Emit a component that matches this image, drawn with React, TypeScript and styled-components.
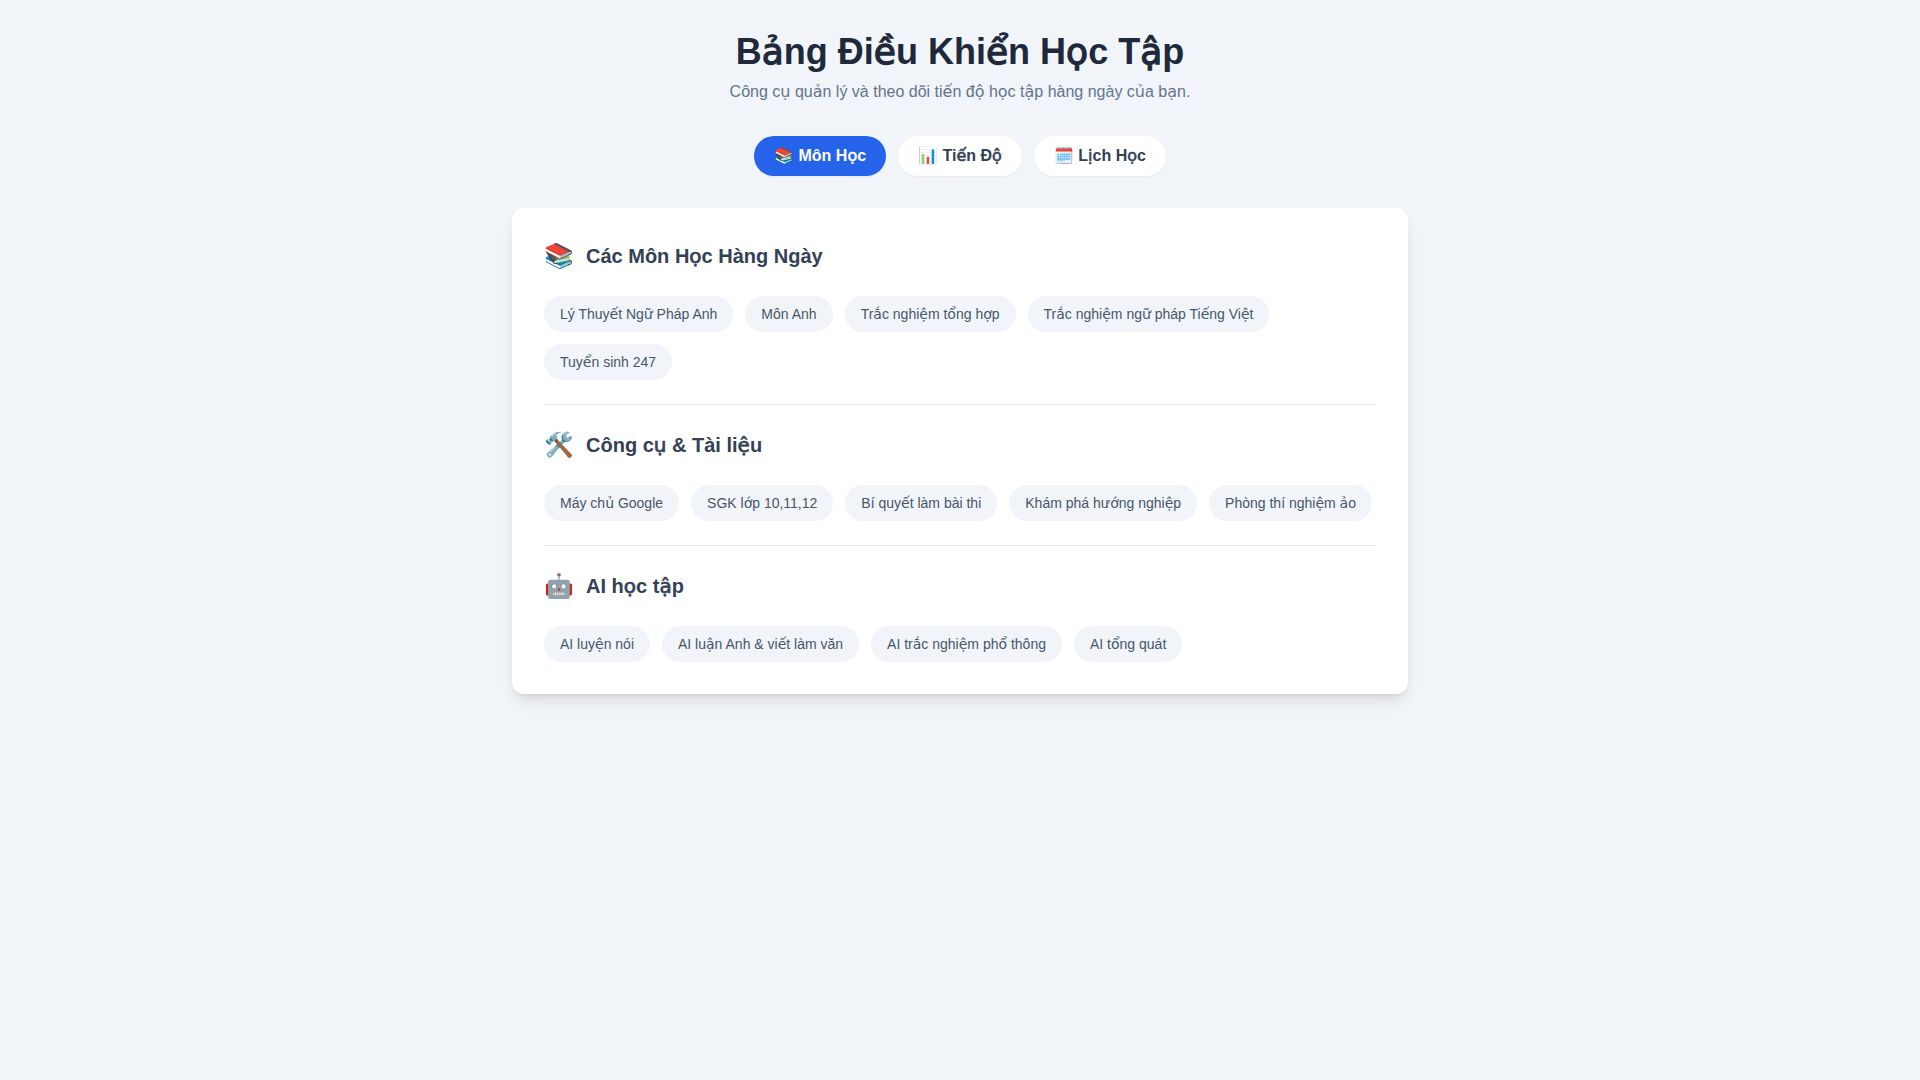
import React, { useState } from "react";
import styled, { createGlobalStyle, css } from "styled-components";

const GlobalStyle = createGlobalStyle`
  *, *::before, *::after { box-sizing: border-box; }
  body {
    margin: 0;
    min-height: 100vh;
    background: #f1f5f9;
    color: #1e293b;
    font-family: "Liberation Sans", Arial, sans-serif;
    font-size: 16px;
    line-height: 24px;
  }
`;

const Accented = styled.span<{ $bold: boolean }>`
  font-family: "DejaVu Sans", sans-serif;
  font-weight: 400;
  line-height: 0;
  ${(p) => p.$bold && css`-webkit-text-stroke: 0.035em currentColor;`}
`;

const Page = styled.main`
  max-width: 896px;
  margin: 0 auto;
  padding: 32px 0;
`;

const Header = styled.header`
  margin-bottom: 32px;
  text-align: center;
`;

const Title = styled.h1`
  margin: 0;
  font-size: 36px;
  line-height: 40px;
  font-weight: 700;
`;

const Subtitle = styled.p`
  margin: 8px 0 0;
  color: #64748b;
`;

const Tabs = styled.nav`
  display: flex;
  flex-wrap: wrap;
  justify-content: center;
  gap: 12px;
  margin-bottom: 32px;
`;

const Tab = styled.button<{ $active: boolean }>`
  padding: 8px 20px;
  border: 0;
  border-radius: 9999px;
  background: ${(p) => (p.$active ? "#2563eb" : "#ffffff")};
  color: ${(p) => (p.$active ? "#ffffff" : "#334155")};
  box-shadow: 0 1px 2px rgba(0, 0, 0, 0.05);
  font: inherit;
  font-weight: 600;
  cursor: pointer;
`;

const Card = styled.div`
  padding: 32px;
  border-radius: 12px;
  background: #ffffff;
  box-shadow: 0 10px 15px -3px rgba(0, 0, 0, 0.1), 0 4px 6px -4px rgba(0, 0, 0, 0.1);
`;

const Section = styled.section`
  & + & {
    margin-top: 24px;
    padding-top: 24px;
    border-top: 1px solid #e2e8f0;
  }
`;

const SectionHead = styled.div`
  display: flex;
  align-items: center;
  gap: 12px;
  margin-bottom: 24px;
`;

const SectionIcon = styled.span`
  font-size: 24px;
  line-height: 32px;
`;

const SectionTitle = styled.h2`
  margin: 0;
  color: #334155;
  font-size: 20px;
  line-height: 28px;
  font-weight: 700;
`;

const Chips = styled.div`
  display: flex;
  flex-wrap: wrap;
  gap: 12px;
`;

const Chip = styled.a`
  padding: 8px 16px;
  border-radius: 9999px;
  background: #f1f5f9;
  color: #475569;
  font-size: 14px;
  line-height: 20px;
  text-decoration: none;
`;

// Vietnamese letters with stacked or below-letter marks get the wider face.
const accentedLetters = /([\u1ea0-\u1ef9]+)/;

function Viet({ text, bold = false }: { text: string; bold?: boolean }) {
  return (
    <>
      {text.split(accentedLetters).map((part, i) =>
        i % 2 ? <Accented key={i} $bold={bold}>{part}</Accented> : part
      )}
    </>
  );
}

const tabs = [
  { icon: "📚", label: "Môn Học" },
  { icon: "📊", label: "Tiến Độ" },
  { icon: "🗓️", label: "Lịch Học" },
];

const sections = [
  {
    icon: "📚",
    title: "Các Môn Học Hàng Ngày",
    links: ["Lý Thuyết Ngữ Pháp Anh", "Môn Anh", "Trắc nghiệm tổng hợp", "Trắc nghiệm ngữ pháp Tiếng Việt", "Tuyển sinh 247"],
  },
  {
    icon: "🛠️",
    title: "Công cụ & Tài liệu",
    links: ["Máy chủ Google", "SGK lớp 10,11,12", "Bí quyết làm bài thi", "Khám phá hướng nghiệp", "Phòng thí nghiệm ảo"],
  },
  {
    icon: "🤖",
    title: "AI học tập",
    links: ["AI luyện nói", "AI luận Anh & viết làm văn", "AI trắc nghiệm phổ thông", "AI tổng quát"],
  },
];

export default function App() {
  const [active, setActive] = useState(0);
  return (
    <>
      <GlobalStyle />
      <Page lang="vi">
        <Header>
          <Title><Viet bold text="Bảng Điều Khiển Học Tập" /></Title>
          <Subtitle><Viet text="Công cụ quản lý và theo dõi tiến độ học tập hàng ngày của bạn." /></Subtitle>
        </Header>
        <Tabs>
          {tabs.map((tab, i) => (
            <Tab key={tab.label} type="button" $active={i === active} onClick={() => setActive(i)}>
              <Viet bold text={`${tab.icon} ${tab.label}`} />
            </Tab>
          ))}
        </Tabs>
        <Card>
          {sections.map((section) => (
            <Section key={section.title}>
              <SectionHead>
                <SectionIcon>{section.icon}</SectionIcon>
                <SectionTitle><Viet bold text={section.title} /></SectionTitle>
              </SectionHead>
              <Chips>
                {section.links.map((link) => (
                  <Chip key={link} href="#"><Viet text={link} /></Chip>
                ))}
              </Chips>
            </Section>
          ))}
        </Card>
      </Page>
    </>
  );
}
